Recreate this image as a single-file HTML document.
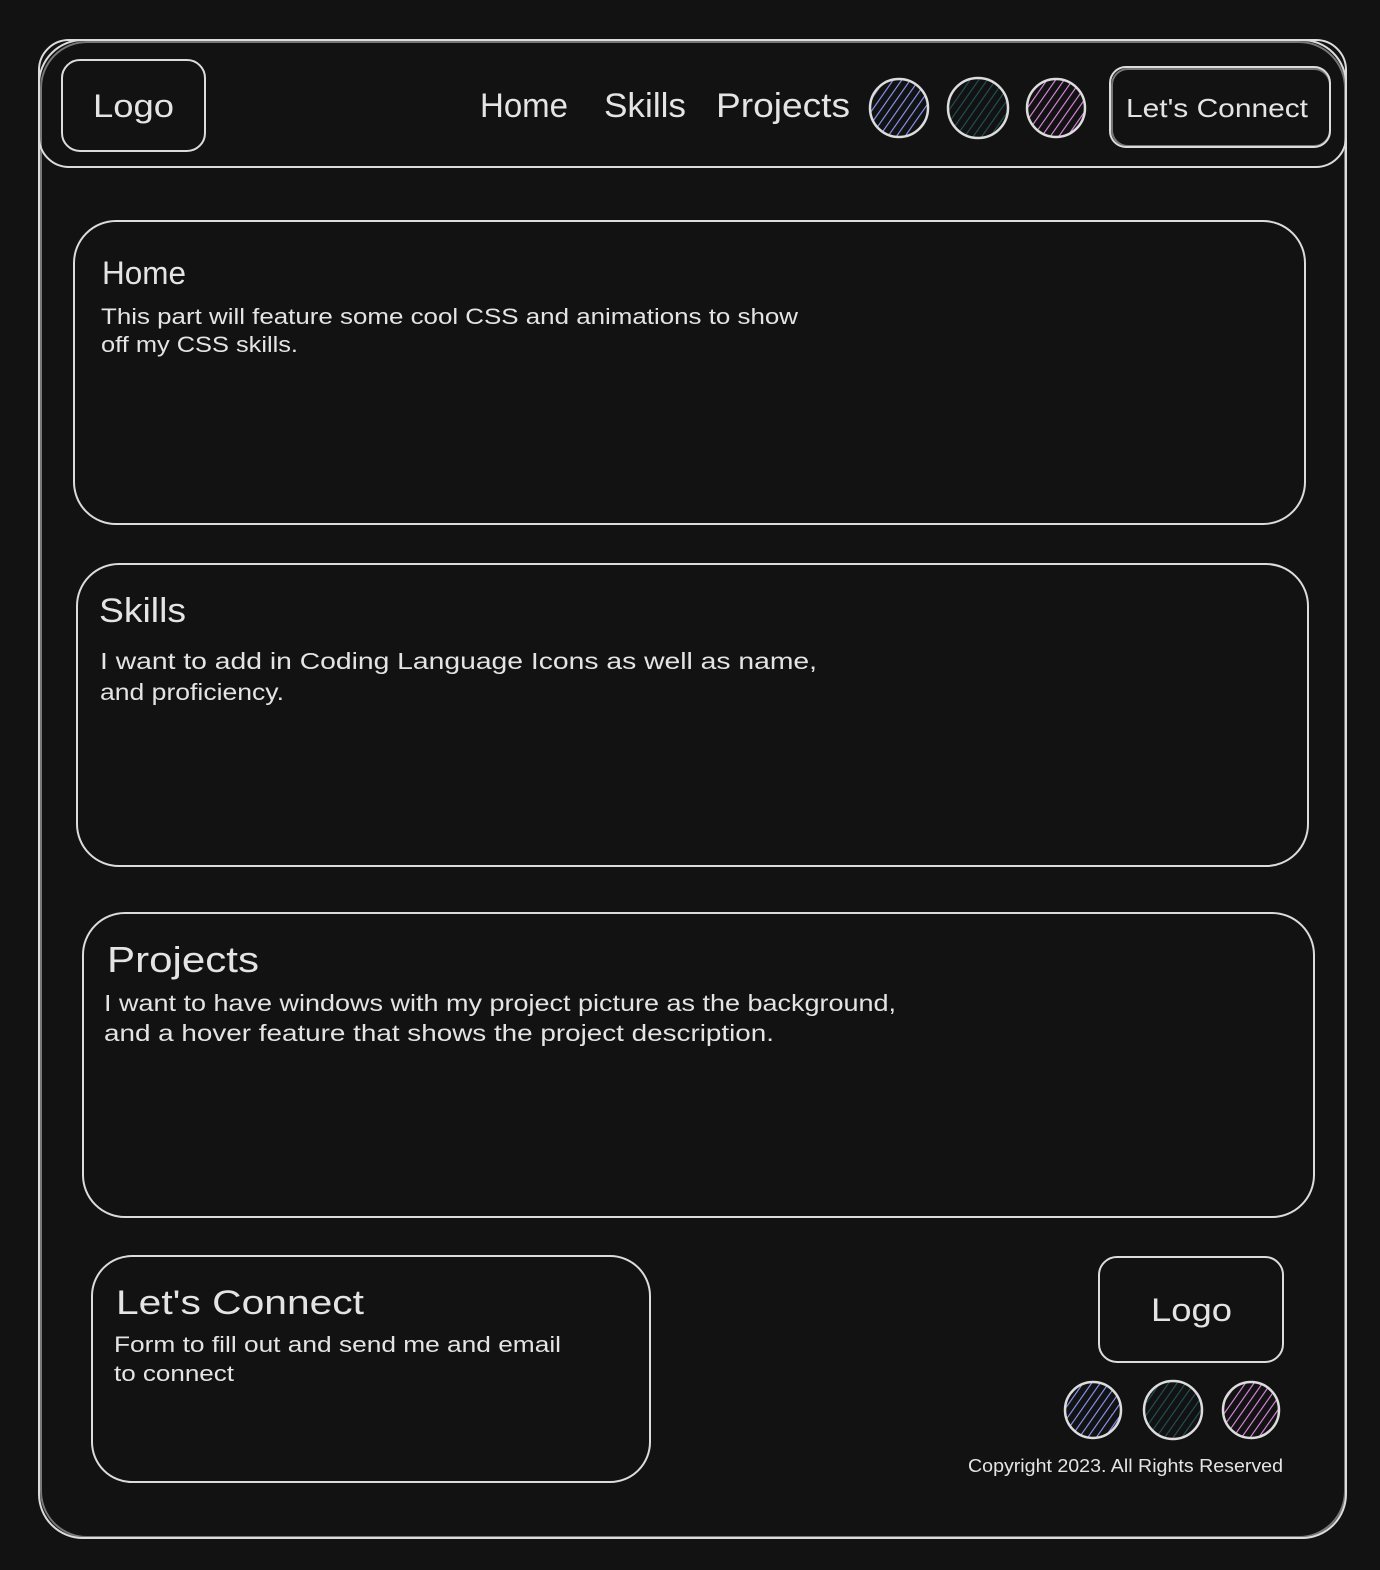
<!DOCTYPE html>
<html><head><meta charset="utf-8"><style>
html,body{margin:0;padding:0;background:#121212;}
svg{display:block}
text{font-family:"Liberation Sans",sans-serif;fill:#e4e4e4}
</style></head><body>
<svg width="1380" height="1570" viewBox="0 0 1380 1570" xmlns="http://www.w3.org/2000/svg">
<defs>
<pattern id="hb" patternUnits="userSpaceOnUse" width="7" height="7" patternTransform="rotate(35)"><line x1="0" y1="0" x2="0" y2="7" stroke="#8a9cff" stroke-width="2.2"/></pattern>
<pattern id="ht" patternUnits="userSpaceOnUse" width="7" height="7" patternTransform="rotate(35)"><line x1="0" y1="0" x2="0" y2="7" stroke="#21535a" stroke-width="2.2"/></pattern>
<pattern id="hp" patternUnits="userSpaceOnUse" width="7" height="7" patternTransform="rotate(35)"><line x1="0" y1="0" x2="0" y2="7" stroke="#e38ae8" stroke-width="2.2"/></pattern>
</defs>
<g fill="none" stroke="#dcdcdc" stroke-width="2">
<rect x="39" y="40" width="1307" height="1498" rx="44"/>
<rect x="41" y="42" width="1304" height="1495" rx="46" stroke-opacity=".5"/>
<rect x="39" y="40" width="1307" height="127" rx="30"/>
<rect x="62" y="60" width="143" height="91" rx="18"/>
<rect x="1110" y="67" width="220" height="80" rx="16"/>
<rect x="1112" y="69" width="218" height="77" rx="16" stroke-opacity=".5"/>
<rect x="74" y="221" width="1231" height="303" rx="42"/>
<rect x="77" y="564" width="1231" height="302" rx="42"/>
<rect x="83" y="913" width="1231" height="304" rx="42"/>
<rect x="92" y="1256" width="558" height="226" rx="40"/>
<rect x="1099" y="1257" width="184" height="105" rx="18"/>
</g>
<g stroke="#dcdcdc" stroke-width="2.5">
<circle cx="899" cy="108" r="29" fill="url(#hb)"/>
<circle cx="978" cy="108" r="30" fill="url(#ht)"/>
<circle cx="1056" cy="108" r="29" fill="url(#hp)"/>
<circle cx="1093" cy="1410" r="28" fill="url(#hb)"/>
<circle cx="1173" cy="1410" r="29" fill="url(#ht)"/>
<circle cx="1251" cy="1410" r="28" fill="url(#hp)"/>
</g>
<g lengthAdjust="spacingAndGlyphs">
<text x="93" y="117" font-size="32" textLength="81" lengthAdjust="spacingAndGlyphs">Logo</text>
<text x="480" y="117" font-size="34" textLength="88" lengthAdjust="spacingAndGlyphs">Home</text>
<text x="604" y="117" font-size="34" textLength="82" lengthAdjust="spacingAndGlyphs">Skills</text>
<text x="716" y="117" font-size="34" textLength="134" lengthAdjust="spacingAndGlyphs">Projects</text>
<text x="1126" y="117" font-size="26" textLength="182" lengthAdjust="spacingAndGlyphs">Let's Connect</text>
<text x="102" y="284" font-size="32" textLength="84" lengthAdjust="spacingAndGlyphs">Home</text>
<text x="101" y="324" font-size="22" textLength="697" lengthAdjust="spacingAndGlyphs">This part will feature some cool CSS and animations to show</text>
<text x="101" y="352" font-size="22" textLength="197" lengthAdjust="spacingAndGlyphs">off my CSS skills.</text>
<text x="99" y="622" font-size="34" textLength="87" lengthAdjust="spacingAndGlyphs">Skills</text>
<text x="100" y="669" font-size="23" textLength="717" lengthAdjust="spacingAndGlyphs">I want to add in Coding Language Icons as well as name,</text>
<text x="100" y="700" font-size="23" textLength="184" lengthAdjust="spacingAndGlyphs">and proficiency.</text>
<text x="107" y="972" font-size="36" textLength="152" lengthAdjust="spacingAndGlyphs">Projects</text>
<text x="104" y="1011" font-size="23" textLength="792" lengthAdjust="spacingAndGlyphs">I want to have windows with my project picture as the background,</text>
<text x="104" y="1041" font-size="23" textLength="670" lengthAdjust="spacingAndGlyphs">and a hover feature that shows the project description.</text>
<text x="116" y="1314" font-size="34" textLength="248" lengthAdjust="spacingAndGlyphs">Let's Connect</text>
<text x="114" y="1352" font-size="22" textLength="447" lengthAdjust="spacingAndGlyphs">Form to fill out and send me and email</text>
<text x="114" y="1381" font-size="22" textLength="120" lengthAdjust="spacingAndGlyphs">to connect</text>
<text x="1151" y="1321" font-size="32" textLength="81" lengthAdjust="spacingAndGlyphs">Logo</text>
<text x="968" y="1472" font-size="18" textLength="315" lengthAdjust="spacingAndGlyphs">Copyright 2023. All Rights Reserved</text>
</g>
</svg>
</body></html>
